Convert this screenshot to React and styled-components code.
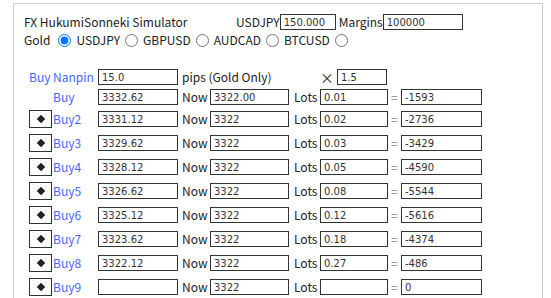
import React from "react";
import styled, { createGlobalStyle } from "styled-components";

const Global = createGlobalStyle`
  html, body { margin: 0; padding: 0; background: #fff; }
  body {
    font-family: "Noto Sans CJK JP", "Noto Sans", sans-serif;
    font-size: 12px;
    color: #222;
  }
`;

const Panel = styled.div`
  margin: 3px 0 0 13px;
  width: 530px;
  min-height: 330px;
  border: 1px solid #ccc;
  padding: 10px 0 0 10px;
  box-sizing: border-box;
`;

const HeadRow = styled.div`
  display: flex;
  align-items: center;
  height: 16px;
  line-height: 16px;
  margin-top: ${(p) => p.$mt || 0}px;
`;

const Title = styled.span`
  width: 212px;
`;

const Label = styled.span`
  margin-left: ${(p) => p.$ml || 0}px;
  margin-right: ${(p) => p.$mr || 0}px;
  color: #222;
  white-space: nowrap;
`;

const Field = styled.input`
  box-sizing: border-box;
  width: ${(p) => (p.$w ? `${p.$w}px` : "100%")};
  height: 16px;
  border: 1px solid #333;
  border-radius: 0;
  padding: 0 3px;
  margin: 0;
  font-family: "DejaVu Sans", Verdana, sans-serif;
  font-size: 10px;
  color: #333;
  background: #fff;
  outline: none;
`;

const Radio = styled.input.attrs({ type: "radio" })`
  width: 13px;
  height: 13px;
  margin: 0 5px;
`;

const Table = styled.div`
  margin: 21px 0 0 5px;
  display: flex;
  flex-direction: column;
  gap: 4px;
`;

const Row = styled.div`
  display: grid;
  grid-template-columns: 23px 46px 80px 32px 79px 31px 68px 13px 81px;
  align-items: center;
  height: ${(p) => p.$h || 16}px;
  line-height: 16px;
`;

const Cell = styled.div`
  grid-column: ${(p) => p.$span || "auto"};
  padding-left: ${(p) => p.$pl || 0}px;
  display: flex;
  align-items: center;
  white-space: nowrap;
  color: ${(p) => (p.$blue ? "#4466ff" : p.$gray ? "#888" : "#222")};
`;

const DiamondButton = styled.button`
  box-sizing: border-box;
  width: 23px;
  height: 18px;
  border: 1px solid #333;
  background: #fff;
  padding: 0;
  margin: 0;
  display: flex;
  align-items: center;
  justify-content: center;
  &::before {
    content: "";
    width: 6px;
    height: 6px;
    background: #222;
    transform: rotate(45deg);
  }
`;

const Times = styled.span`
  font-size: 14px;
  margin-right: 3px;
  color: #333;
`;

const rows = [
  { name: "Buy2", price: "3331.12", lots: "0.02", res: "-2736" },
  { name: "Buy3", price: "3329.62", lots: "0.03", res: "-3429" },
  { name: "Buy4", price: "3328.12", lots: "0.05", res: "-4590" },
  { name: "Buy5", price: "3326.62", lots: "0.08", res: "-5544" },
  { name: "Buy6", price: "3325.12", lots: "0.12", res: "-5616" },
  { name: "Buy7", price: "3323.62", lots: "0.18", res: "-4374" },
  { name: "Buy8", price: "3322.12", lots: "0.27", res: "-486" },
  { name: "Buy9", price: "", lots: "", res: "0" },
];

const symbols = ["USDJPY", "GBPUSD", "AUDCAD", "BTCUSD"];

export default function App() {
  return (
    <>
      <Global />
      <Panel>
        <HeadRow>
          <Title>FX HukumiSonneki Simulator</Title>
          <Label>USDJPY</Label>
          <Field $w={56} defaultValue="150.000" />
          <Label $ml={3}>Margins</Label>
          <Field $w={80} defaultValue="100000" />
        </HeadRow>
        <HeadRow $mt={2}>
          <Label $mr={3}>Gold</Label>
          {symbols.map((s, i) => (
            <React.Fragment key={s}>
              <Radio name="sym" defaultChecked={i === 0} />
              <Label>{s}</Label>
            </React.Fragment>
          ))}
          <Radio name="sym" />
        </HeadRow>
        <Table>
          <Row>
            <Cell $span="1 / 3" $blue>Buy Nanpin</Cell>
            <Cell><Field defaultValue="15.0" /></Cell>
            <Cell $span="4 / 7" $pl={4}>pips (Gold Only)</Cell>
            <Cell>
              <Times>×</Times>
              <Field $w={50} defaultValue="1.5" />
            </Cell>
          </Row>
          <Row>
            <Cell $span="2 / 3" $pl={1} $blue>Buy</Cell>
            <Cell><Field defaultValue="3332.62" /></Cell>
            <Cell $pl={4}>Now</Cell>
            <Cell><Field defaultValue="3322.00" /></Cell>
            <Cell $pl={5}>Lots</Cell>
            <Cell><Field defaultValue="0.01" /></Cell>
            <Cell $pl={3} $gray>=</Cell>
            <Cell><Field defaultValue="-1593" /></Cell>
          </Row>
          {rows.map((r) => (
            <Row key={r.name} $h={20}>
              <Cell><DiamondButton aria-label="toggle" /></Cell>
              <Cell $pl={1} $blue>{r.name}</Cell>
              <Cell><Field defaultValue={r.price} /></Cell>
              <Cell $pl={4}>Now</Cell>
              <Cell><Field defaultValue="3322" /></Cell>
              <Cell $pl={5}>Lots</Cell>
              <Cell><Field defaultValue={r.lots} /></Cell>
              <Cell $pl={3} $gray>=</Cell>
              <Cell><Field defaultValue={r.res} /></Cell>
            </Row>
          ))}
        </Table>
      </Panel>
    </>
  );
}
